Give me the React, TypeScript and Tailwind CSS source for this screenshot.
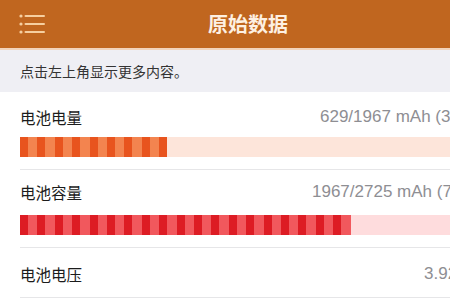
import React from "react";

const cjk = { fontFamily: '"Noto Sans CJK SC", "Noto Sans", sans-serif' };
const num = { fontFamily: '"Liberation Sans", "Noto Sans CJK SC", sans-serif' };

function MenuIcon() {
  return (
    <svg width="28" height="24" viewBox="0 0 28 24" className="shrink-0">
      <g fill="#f6cfa0">
        <circle cx="3" cy="4" r="1.6" />
        <circle cx="3" cy="12" r="1.6" />
        <circle cx="3" cy="20" r="1.6" />
      </g>
      <g stroke="#f6cfa0" strokeWidth="2" strokeLinecap="round">
        <line x1="7.5" y1="4" x2="26" y2="4" />
        <line x1="7.5" y1="12" x2="26" y2="12" />
        <line x1="7.5" y1="20" x2="26" y2="20" />
      </g>
    </svg>
  );
}

export default function App() {
  return (
    <div className="w-[450px] h-[300px] overflow-hidden bg-white" style={cjk}>
      <div className="h-[48px] bg-[#c0661f] flex items-center pl-[18px]">
        <MenuIcon />
        <div className="ml-[162px] text-[20px] font-bold text-[#fdf0e2] leading-none whitespace-nowrap">原始数据</div>
      </div>
      <div className="h-[2px] bg-[#f2d3bb]" />
      <div className="h-[42px] bg-[#efeff4] flex items-center pl-[20px] text-[14px] text-[#333333] whitespace-nowrap">
        点击左上角显示更多内容。
      </div>

      <div className="pl-[20px]">
        <div className="pt-[14px] pb-[12px] border-b border-[#e6e6e8]">
          <div className="grid grid-cols-[300px_1fr] leading-[22px] whitespace-nowrap">
            <span className="text-[15.5px] text-[#1c1c1c]">电池电量</span>
            <span className="text-[17px] text-[#8e8e93]" style={num}>629/1967 mAh (32%)</span>
          </div>
          <div className="mt-[9px] h-[20px] w-[460px] bg-[#fde5da]">
            <div className="h-full w-[147px] bg-[repeating-linear-gradient(90deg,#e8541e_0px,#e8541e_8px,#f3844f_8px,#f3844f_17.4px)]" />
          </div>
        </div>

        <div className="pt-[11px] pb-[12px] border-b border-[#e6e6e8]">
          <div className="grid grid-cols-[292px_1fr] leading-[22px] whitespace-nowrap">
            <span className="text-[15.5px] text-[#1c1c1c]">电池容量</span>
            <span className="text-[17px] text-[#8e8e93]" style={num}>1967/2725 mAh (72%)</span>
          </div>
          <div className="mt-[12px] h-[20px] w-[460px] bg-[#fedcdd]">
            <div className="h-full w-[331px] bg-[repeating-linear-gradient(90deg,#dd1c24_0px,#dd1c24_8px,#f1585d_8px,#f1585d_17.4px)]" />
          </div>
        </div>

        <div className="pt-[15px] pb-[12px] border-b border-[#e6e6e8]">
          <div className="grid grid-cols-[404px_1fr] leading-[22px] whitespace-nowrap">
            <span className="text-[15.5px] text-[#1c1c1c]">电池电压</span>
            <span className="text-[17px] text-[#8e8e93]" style={num}>3.92 V</span>
          </div>
        </div>
      </div>
    </div>
  );
}
